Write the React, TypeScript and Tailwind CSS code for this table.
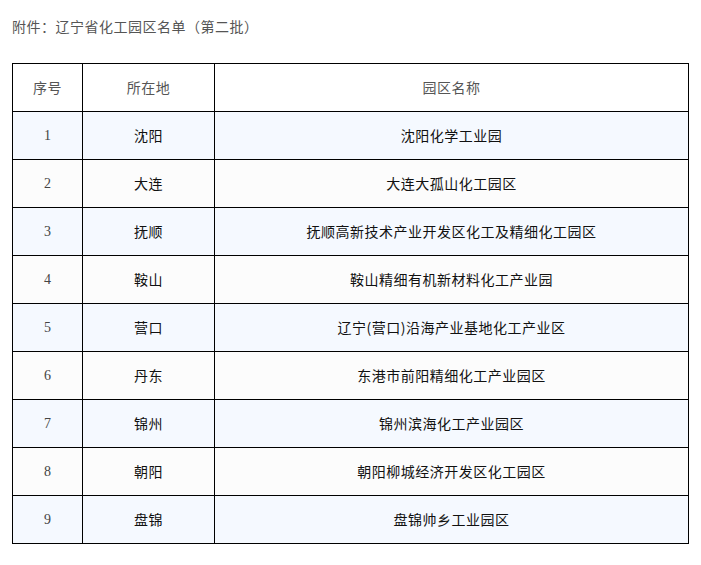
const rows = [
  { no: 1, city: '沈阳', name: '沈阳化学工业园' },
  { no: 2, city: '大连', name: '大连大孤山化工园区' },
  { no: 3, city: '抚顺', name: '抚顺高新技术产业开发区化工及精细化工园区' },
  { no: 4, city: '鞍山', name: '鞍山精细有机新材料化工产业园' },
  { no: 5, city: '营口', name: '辽宁(营口)沿海产业基地化工产业区' },
  { no: 6, city: '丹东', name: '东港市前阳精细化工产业园区' },
  { no: 7, city: '锦州', name: '锦州滨海化工产业园区' },
  { no: 8, city: '朝阳', name: '朝阳柳城经济开发区化工园区' },
  { no: 9, city: '盘锦', name: '盘锦帅乡工业园区' },
];

const cjk = "font-['Noto_Sans_CJK_SC','Noto_Sans',sans-serif]";

export default function App() {
  return (
    <div className={`w-[701px] h-[565px] bg-white ${cjk}`}>
      <div className="px-3 pt-4 h-[63px]">
        <p className="text-[14px] leading-[20px] tracking-[0.5px] text-[#555]">附件：辽宁省化工园区名单（第二批）</p>
      </div>
      <table className="ml-3 w-[677px] border-collapse table-fixed">
        <colgroup>
          <col className="w-[70px]" />
          <col className="w-[132px]" />
          <col />
        </colgroup>
        <thead>
          <tr className="h-[48px] bg-white">
            <th className="border border-black text-[14px] font-normal tracking-[0.5px] text-[#555]">序号</th>
            <th className="border border-black text-[14px] font-normal tracking-[0.5px] text-[#555]">所在地</th>
            <th className="border border-black text-[14px] font-normal tracking-[0.5px] text-[#555]">园区名称</th>
          </tr>
        </thead>
        <tbody>
          {rows.map((r) => (
            <tr
              key={r.no}
              className={`h-[48px] ${r.no % 2 === 1 ? 'bg-[#f5f9ff]' : 'bg-[#fcfcfc]'}`}
            >
              <td className="border border-black text-center text-[14px] text-[#444] font-['Liberation_Serif',serif]">
                {r.no}
              </td>
              <td className="border border-black text-center text-[14px] tracking-[0.5px] text-[#111]">{r.city}</td>
              <td className="border border-black text-center text-[14px] tracking-[0.5px] text-[#111]">{r.name}</td>
            </tr>
          ))}
        </tbody>
      </table>
    </div>
  );
}
